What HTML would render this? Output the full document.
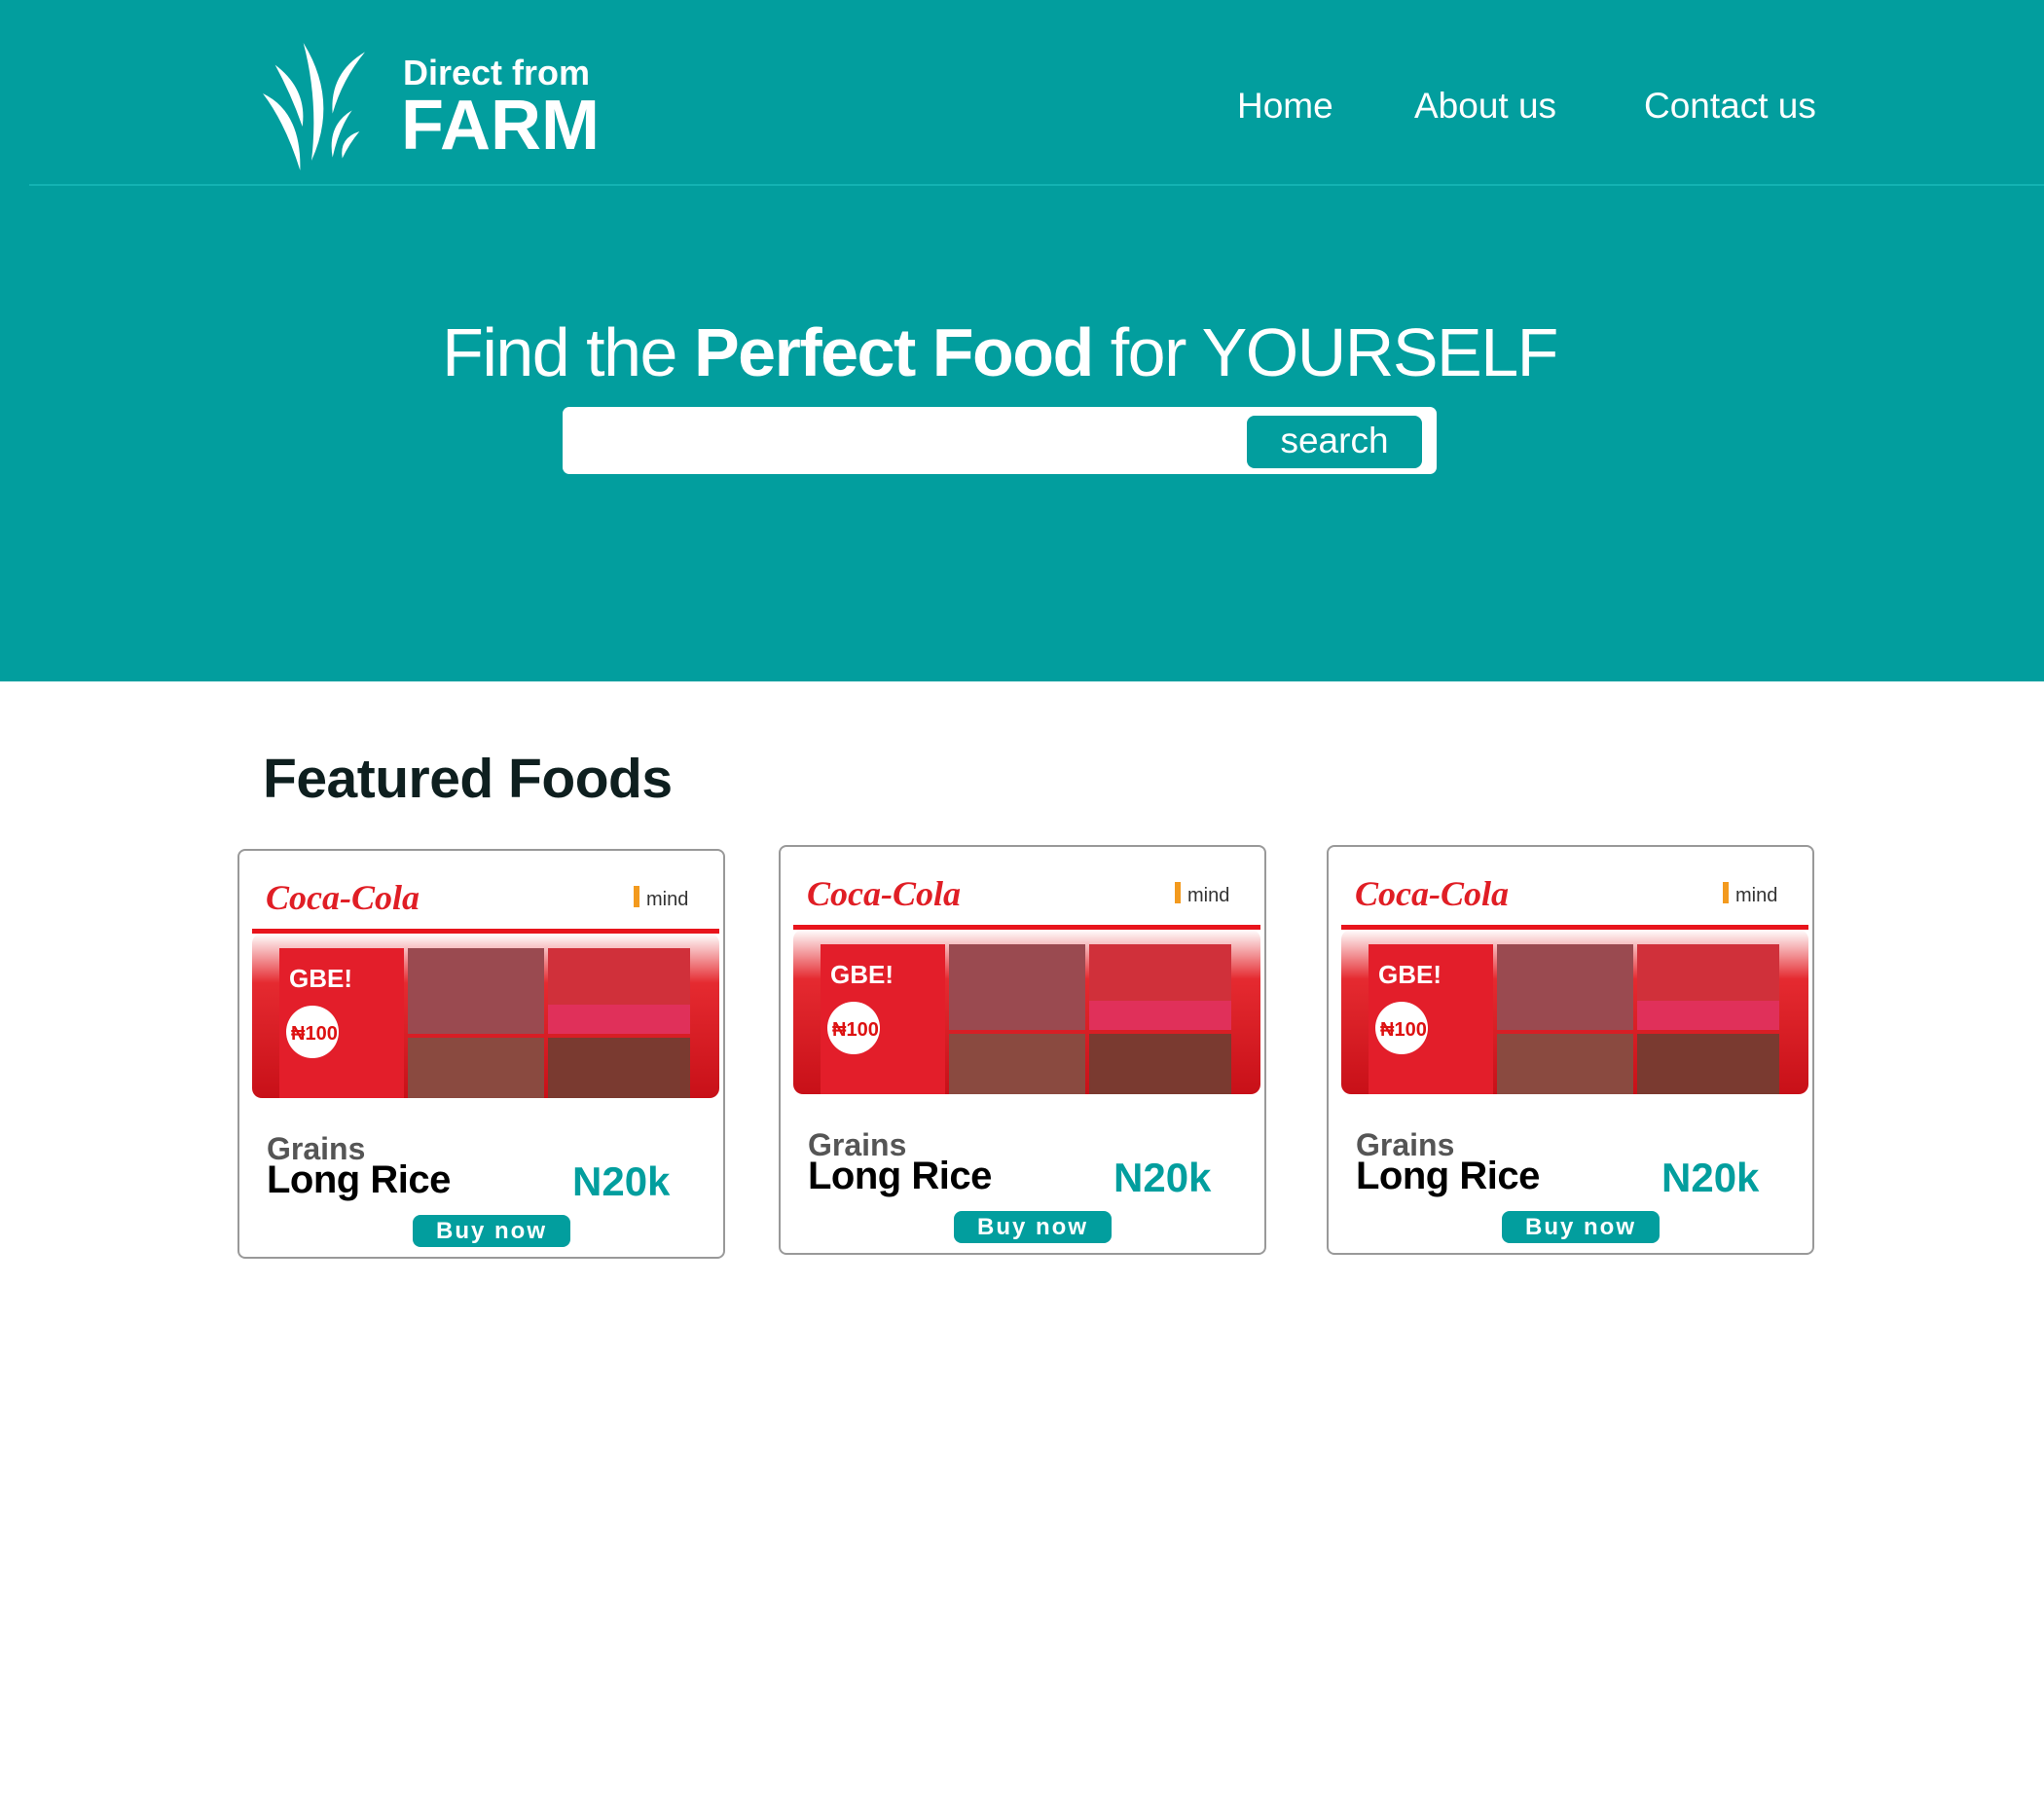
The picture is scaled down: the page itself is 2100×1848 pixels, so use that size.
<!DOCTYPE html>
<html><head><meta charset="utf-8"><style>
*{margin:0;padding:0;box-sizing:border-box}
body{width:2100px;height:1848px;background:#fff;font-family:"Liberation Sans",sans-serif;position:relative;overflow:hidden}
.hdr{position:absolute;left:0;top:0;width:2100px;height:700px;background:#029e9e}
.line{position:absolute;left:30px;top:189px;width:2070px;height:2px;background:#14b3b3}
.abs{position:absolute;white-space:nowrap}
.nav{color:#fff;font-size:37px;top:88px}
.card{position:absolute;width:501px;height:421px;border:2px solid #999;border-radius:8px;background:#fff}
.img{position:absolute;left:13px;top:18px;width:480px;height:236px}
.grains{position:absolute;left:28px;top:288px;font-size:32px;font-weight:bold;color:#555}
.name{position:absolute;left:28px;top:316px;font-size:40px;font-weight:bold;color:#000;letter-spacing:-0.5px}
.price{position:absolute;left:342px;top:316px;font-size:42px;font-weight:bold;color:#029e9e}
.buy{position:absolute;left:178px;top:374px;width:162px;height:33px;border-radius:8px;background:#029e9e;color:#fff;font-weight:bold;font-size:24px;letter-spacing:2px;text-align:center;line-height:33px}
</style></head><body>
<div class="hdr"></div>
<div class="line"></div>
<svg class="abs" style="left:240px;top:20px" width="420" height="170" viewBox="0 0 1260 510">
<g fill="#fff">
<path d="M90,228 Q210,285 205,465 Q160,320 90,228Z"/>
<path d="M128,140 Q228,215 212,330 Q178,232 128,140Z"/>
<path d="M215,72 Q325,250 240,435 Q262,250 215,72Z"/>
<path d="M405,100 Q295,165 305,290 Q335,185 405,100Z"/>
<path d="M365,280 Q288,325 305,425 Q325,335 365,280Z"/>
<path d="M388,345 Q325,365 335,428 Q355,385 388,345Z"/>
</g></svg>
<div class="abs" style="left:414px;top:54px;font-size:36px;font-weight:bold;color:#fff">Direct from</div>
<div class="abs" style="left:412px;top:88px;font-size:72px;font-weight:bold;color:#fff">FARM</div>
<div class="abs nav" style="left:1271px">Home</div>
<div class="abs nav" style="left:1453px">About us</div>
<div class="abs nav" style="left:1689px">Contact us</div>
<div class="abs" style="left:453px;top:322px;width:1148px;text-align:center;font-size:70px;color:#fff;letter-spacing:-1.5px">Find the <b>Perfect Food</b> for YOURSELF</div>
<div class="abs" style="left:578px;top:418px;width:898px;height:69px;background:#fff;border-radius:7px"></div>
<div class="abs" style="left:1281px;top:427px;width:180px;height:54px;background:#029e9e;border-radius:8px;color:#fff;font-size:37px;text-align:center;line-height:52px">search</div>
<div class="abs" style="left:270px;top:767px;font-size:57px;font-weight:bold;color:#0e1f1f;letter-spacing:-0.5px">Featured Foods</div>

<svg width="0" height="0" style="position:absolute"><defs><linearGradient id="g" x1="0" y1="0" x2="0" y2="1"><stop offset="0" stop-color="#fff"/><stop offset=".3" stop-color="#e52a30"/><stop offset="1" stop-color="#c81018"/></linearGradient></defs></svg>

<div class="card" style="left:244px;top:872px">
 <svg class="img" viewBox="0 0 480 236">
  <text x="14" y="42" font-family="Liberation Serif" font-style="italic" font-weight="bold" font-size="36" fill="#e01e25">Coca-Cola</text>
  <text x="405" y="38" font-size="20" fill="#333" font-family="Liberation Sans">mind</text>
  <rect x="392" y="18" width="6" height="22" fill="#f39a1e"/>
  <rect x="0" y="62" width="480" height="5" fill="#e8141c"/>
  <rect x="0" y="67" width="480" height="169" rx="10" fill="url(#g)"/>
  <rect x="28" y="82" width="128" height="154" fill="#e31e2a"/>
  <text x="38" y="122" font-size="26" font-weight="bold" fill="#fff">GBE!</text>
  <circle cx="62" cy="168" r="27" fill="#fff"/>
  <text x="40" y="176" font-size="20" font-weight="bold" fill="#d11">₦100</text>
  <rect x="160" y="82" width="140" height="88" fill="#9a4a50"/>
  <rect x="304" y="82" width="146" height="88" fill="#d0303a"/>
  <rect x="304" y="140" width="146" height="30" fill="#e0305a"/>
  <rect x="160" y="174" width="140" height="62" fill="#8a4a40"/>
  <rect x="304" y="174" width="146" height="62" fill="#7a3a30"/>
 </svg>
 <div class="grains">Grains</div><div class="name">Long Rice</div><div class="price">N20k</div><div class="buy">Buy now</div>
</div>
<div class="card" style="left:800px;top:868px">
 <svg class="img" viewBox="0 0 480 236">
  <text x="14" y="42" font-family="Liberation Serif" font-style="italic" font-weight="bold" font-size="36" fill="#e01e25">Coca-Cola</text>
  <text x="405" y="38" font-size="20" fill="#333" font-family="Liberation Sans">mind</text>
  <rect x="392" y="18" width="6" height="22" fill="#f39a1e"/>
  <rect x="0" y="62" width="480" height="5" fill="#e8141c"/>
  <rect x="0" y="67" width="480" height="169" rx="10" fill="url(#g)"/>
  <rect x="28" y="82" width="128" height="154" fill="#e31e2a"/>
  <text x="38" y="122" font-size="26" font-weight="bold" fill="#fff">GBE!</text>
  <circle cx="62" cy="168" r="27" fill="#fff"/>
  <text x="40" y="176" font-size="20" font-weight="bold" fill="#d11">₦100</text>
  <rect x="160" y="82" width="140" height="88" fill="#9a4a50"/>
  <rect x="304" y="82" width="146" height="88" fill="#d0303a"/>
  <rect x="304" y="140" width="146" height="30" fill="#e0305a"/>
  <rect x="160" y="174" width="140" height="62" fill="#8a4a40"/>
  <rect x="304" y="174" width="146" height="62" fill="#7a3a30"/>
 </svg>
 <div class="grains">Grains</div><div class="name">Long Rice</div><div class="price">N20k</div><div class="buy">Buy now</div>
</div>
<div class="card" style="left:1363px;top:868px">
 <svg class="img" viewBox="0 0 480 236">
  <text x="14" y="42" font-family="Liberation Serif" font-style="italic" font-weight="bold" font-size="36" fill="#e01e25">Coca-Cola</text>
  <text x="405" y="38" font-size="20" fill="#333" font-family="Liberation Sans">mind</text>
  <rect x="392" y="18" width="6" height="22" fill="#f39a1e"/>
  <rect x="0" y="62" width="480" height="5" fill="#e8141c"/>
  <rect x="0" y="67" width="480" height="169" rx="10" fill="url(#g)"/>
  <rect x="28" y="82" width="128" height="154" fill="#e31e2a"/>
  <text x="38" y="122" font-size="26" font-weight="bold" fill="#fff">GBE!</text>
  <circle cx="62" cy="168" r="27" fill="#fff"/>
  <text x="40" y="176" font-size="20" font-weight="bold" fill="#d11">₦100</text>
  <rect x="160" y="82" width="140" height="88" fill="#9a4a50"/>
  <rect x="304" y="82" width="146" height="88" fill="#d0303a"/>
  <rect x="304" y="140" width="146" height="30" fill="#e0305a"/>
  <rect x="160" y="174" width="140" height="62" fill="#8a4a40"/>
  <rect x="304" y="174" width="146" height="62" fill="#7a3a30"/>
 </svg>
 <div class="grains">Grains</div><div class="name">Long Rice</div><div class="price">N20k</div><div class="buy">Buy now</div>
</div>
</body></html>
